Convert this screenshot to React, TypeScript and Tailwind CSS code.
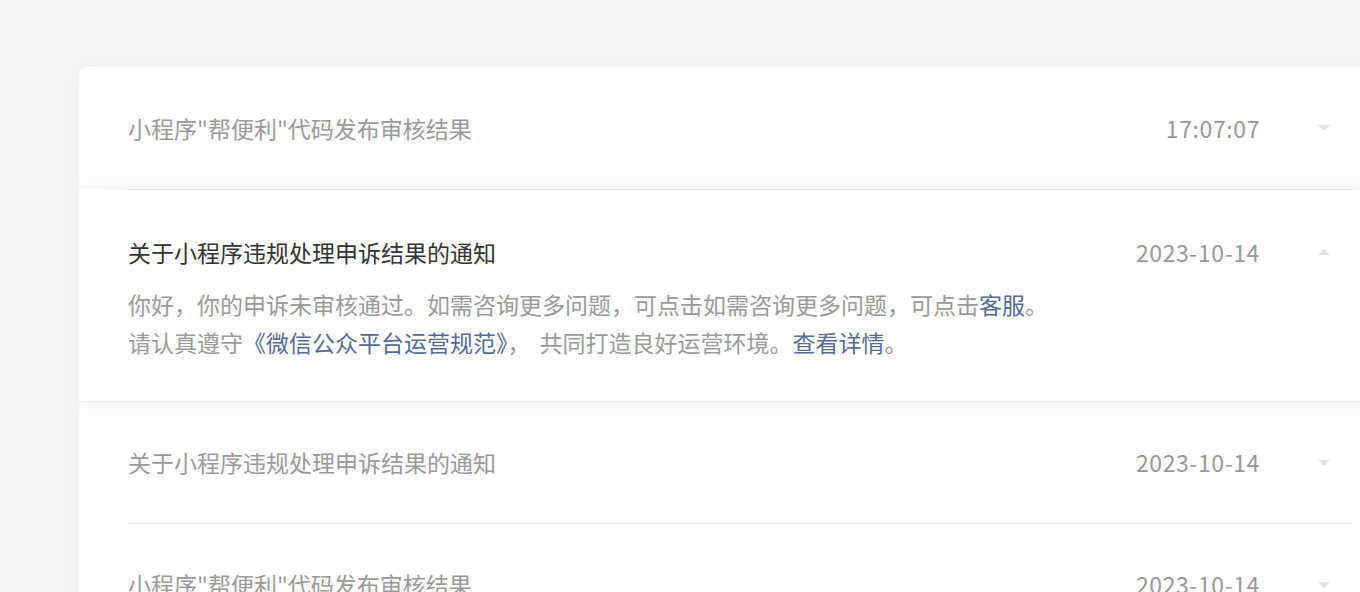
import React from 'react';

interface Notice {
    id: number;
    title: string;
    time: string;
    expanded?: boolean;
}

const notices: Notice[] = [
    { id: 1, title: '小程序"帮便利"代码发布审核结果', time: '17:07:07' },
    { id: 2, title: '关于小程序违规处理申诉结果的通知', time: '2023-10-14', expanded: true },
    { id: 3, title: '关于小程序违规处理申诉结果的通知', time: '2023-10-14' },
    { id: 4, title: '小程序"帮便利"代码发布审核结果', time: '2023-10-14' },
];

const Arrow: React.FC<{ up?: boolean }> = ({ up }) => (
    <svg width="12" height="6" viewBox="0 0 12 6" className="shrink-0">
        {up ? <path d="M0 6 L6 0 L12 6 Z" fill="#e4e4e8" /> : <path d="M0 0 L12 0 L6 6 Z" fill="#e4e4e8" />}
    </svg>
);

export default function App() {
    return (
        <div
            className="w-[1360px] h-[592px] overflow-hidden bg-[#f6f7f9] pt-[67px] pl-[79px]"
            style={{ fontFamily: '"Noto Sans CJK SC", "Noto Sans", sans-serif' }}
        >
            <div className="w-[1323px] bg-white rounded-tl-lg shadow-[0_0_24px_rgba(0,0,0,0.04)] overflow-hidden">
                {notices.map((n, i) =>
                    n.expanded ? (
                        <div
                            key={n.id}
                            className="relative z-10 bg-white border-b border-[#e9eaee] shadow-[0_0_36px_rgba(0,0,0,0.07)] px-[49px] pt-[43px] pb-[40px]"
                        >
                            <div className="flex items-center h-[38px]">
                                <p className="flex-1 text-[23px] text-[#333333]">{n.title}</p>
                                <span className="text-[23px] text-[#999999] tracking-[0.6px]">{n.time}</span>
                                <div className="w-[93px] flex justify-end pr-[23px]">
                                    <Arrow up />
                                </div>
                            </div>
                            <div className="mt-[14px] text-[23px] leading-[38px] text-[#9a9a9a]">
                                <p>
                                    你好，你的申诉未审核通过。如需咨询更多问题，可点击如需咨询更多问题，可点击
                                    <span className="text-[#576b95]">客服</span>。
                                </p>
                                <p>
                                    请认真遵守<span className="text-[#576b95]">《微信公众平台运营规范》</span>，
                                    <span className="ml-[9px]">共同打造良好运营环境。</span>
                                    <span className="text-[#576b95]">查看详情</span>。
                                </p>
                            </div>
                        </div>
                    ) : (
                        <div key={n.id} className="px-[49px]">
                            <div
                                className={`flex items-center border-b border-[#ececef] ${i === 0 ? 'h-[123px]' : 'h-[122px]'}`}
                            >
                                <p className="flex-1 text-[23px] text-[#9a9a9a]">{n.title}</p>
                                <span className="text-[23px] text-[#999999] tracking-[0.6px]">{n.time}</span>
                                <div className="w-[93px] flex justify-end pr-[23px]">
                                    <Arrow />
                                </div>
                            </div>
                        </div>
                    )
                )}
            </div>
        </div>
    );
}
